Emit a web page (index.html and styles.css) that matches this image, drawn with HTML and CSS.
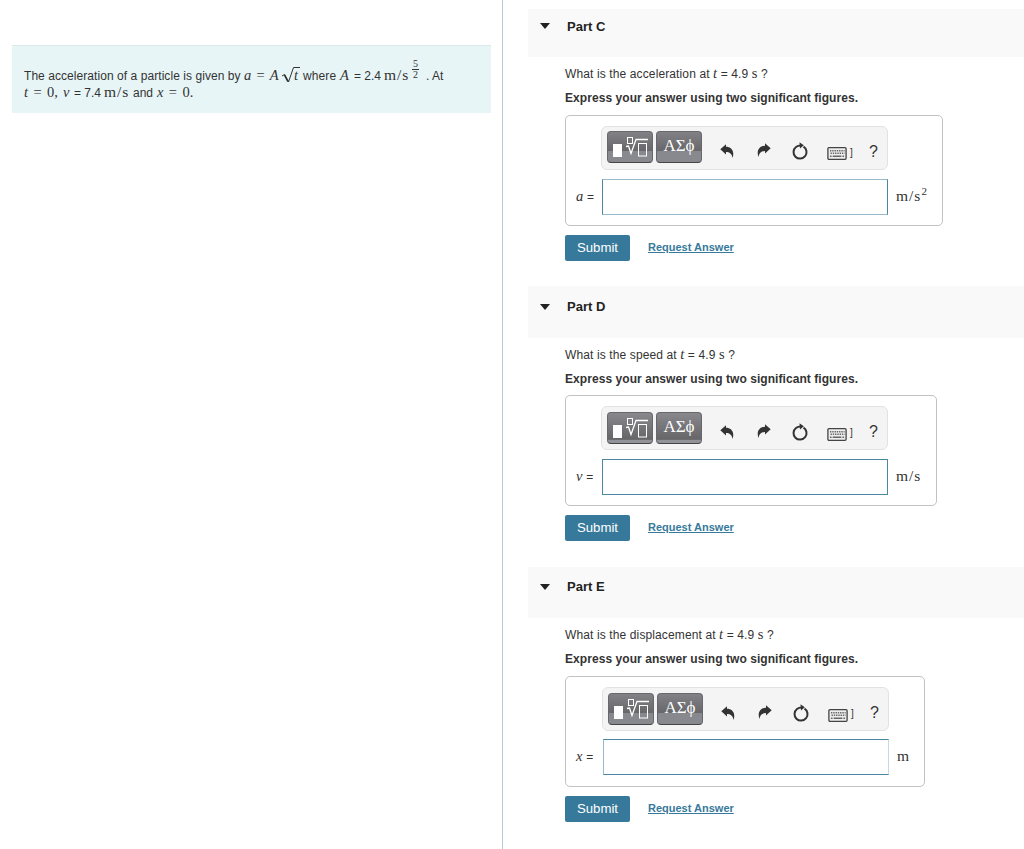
FILE: index.html
```html
<!doctype html>
<html lang="en">
    <head>
        <meta charset="UTF-8" />
        <meta name="viewport" content="width=device-width, initial-scale=1.0" />
        <title>Particle Acceleration</title>
        <link rel="stylesheet" href="styles.css">
    </head>
    <body>
        <svg class="sprite">
            <symbol id="icon-root" viewBox="0 0 36 22">
                <rect x="1" y="9" width="9" height="13" fill="#fff" />
                <g fill="none" stroke="#fff" stroke-width="1">
                    <rect x="15.5" y="2.5" width="5" height="6" />
                    <path d="M14 11.5 L16.5 11 L19 18.5 L24 4.5 H36" stroke-width="1.3" />
                    <rect x="26.5" y="8.5" width="8" height="12.5" />
                </g>
            </symbol>
            <symbol id="icon-undo" viewBox="0 0 14 14">
                <path d="M0.3 5.2 L6 0.2 V2.8 C11 2.8 15 7 12.5 14 C12 9.8 9.5 8 6 8 V10.4 Z" />
            </symbol>
            <symbol id="icon-redo" viewBox="0 0 14 14">
                <path d="M13.7 5.2 L8 0.2 V2.8 C3 2.8 -1 7 1.5 14 C2 9.8 4.5 8 8 8 V10.4 Z" />
            </symbol>
            <symbol id="icon-reset" viewBox="0 0 16 18">
                <path d="M11.5 4.6 A6.5 6.5 0 1 1 4 5 Q6 3.5 8.5 3.5" fill="none" stroke="#333" stroke-width="2" />
                <path d="M7.5 0.3 L11.8 3.3 L8 6.6 Z" />
            </symbol>
            <symbol id="icon-keyboard" viewBox="0 0 18 12">
                <rect x="0.6" y="0.6" width="16.8" height="10.8" rx="1" fill="#eee" stroke="#444" stroke-width="1.2" />
                <path d="M2.5 3.5 H16 M3 5.8 H16" fill="none" stroke="#666" stroke-width="1.3" stroke-dasharray="1.3 0.8" />
                <path d="M2.5 8.5 H4 M5 8.5 H13 M14 8.5 H15.5" fill="none" stroke="#666" stroke-width="1.5" />
            </symbol>
        </svg>

        <div class="page">
            <div class="problem">
                <div class="intro">
                    <div class="line">
                        <span class="t1">The acceleration of a particle is given by</span>
                        <span class="math eq"><i>a</i> = <i>A</i></span><svg class="radical" viewBox="0 0 19 17"><path d="M1 10 L3.5 8.5 L7.5 16 L12.5 1.5 H19" /><path d="M3.5 9 L7 15.5" stroke-width="1.6" /></svg><span class="math root"><i>t</i></span>
                        <span class="t2">where</span>
                        <span class="math var"><i>A</i></span>
                        <span class="t3">= 2.4</span>
                        <span class="math unit">m/s</span>
                        <span class="math frac"><span class="num">5</span><span>2</span></span>
                        <span class="t4">. At</span>
                    </div>
                    <div class="line">
                        <span class="math l1"><i>t</i> = 0,</span>
                        <span class="math l2"><i>v</i></span>
                        <span class="l3">= 7.4</span>
                        <span class="math unit l4">m/s</span>
                        <span class="l5">and</span>
                        <span class="math l6"><i>x</i> = 0.</span>
                    </div>
                </div>
            </div>

            <div class="parts">
                <section class="part part-c">
                    <div class="part-header"><span class="arrow"></span><h2>Part C</h2></div>
                    <div class="part-body">
                        <p class="question">What is the acceleration at <i class="math">t</i> = 4.9 <span class="math">s</span> ?</p>
                        <p class="hint">Express your answer using two significant figures.</p>
                        <div class="answer">
                            <div class="toolbar">
                                <button class="tool"><svg class="root-icon"><use href="#icon-root" /></svg></button>
                                <button class="tool">ΑΣϕ</button>
                                <svg class="icon undo"><use href="#icon-undo" /></svg>
                                <svg class="icon redo"><use href="#icon-redo" /></svg>
                                <svg class="icon reset"><use href="#icon-reset" /></svg>
                                <svg class="icon keyboard"><use href="#icon-keyboard" /></svg>
                                <span class="bracket">]</span>
                                <span class="help">?</span>
                            </div>
                            <div class="entry">
                                <label><i class="math">a</i> =</label>
                                <input type="text">
                                <span class="math units">m/s<sup>2</sup></span>
                            </div>
                        </div>
                        <div class="actions">
                            <button class="submit">Submit</button>
                            <a class="request">Request Answer</a>
                        </div>
                    </div>
                </section>

                <section class="part part-d">
                    <div class="part-header"><span class="arrow"></span><h2>Part D</h2></div>
                    <div class="part-body">
                        <p class="question">What is the speed at <i class="math">t</i> = 4.9 <span class="math">s</span> ?</p>
                        <p class="hint">Express your answer using two significant figures.</p>
                        <div class="answer">
                            <div class="toolbar">
                                <button class="tool"><svg class="root-icon"><use href="#icon-root" /></svg></button>
                                <button class="tool">ΑΣϕ</button>
                                <svg class="icon undo"><use href="#icon-undo" /></svg>
                                <svg class="icon redo"><use href="#icon-redo" /></svg>
                                <svg class="icon reset"><use href="#icon-reset" /></svg>
                                <svg class="icon keyboard"><use href="#icon-keyboard" /></svg>
                                <span class="bracket">]</span>
                                <span class="help">?</span>
                            </div>
                            <div class="entry">
                                <label><i class="math">v</i> =</label>
                                <input type="text">
                                <span class="math units">m/s</span>
                            </div>
                        </div>
                        <div class="actions">
                            <button class="submit">Submit</button>
                            <a class="request">Request Answer</a>
                        </div>
                    </div>
                </section>

                <section class="part part-e">
                    <div class="part-header"><span class="arrow"></span><h2>Part E</h2></div>
                    <div class="part-body">
                        <p class="question">What is the displacement at <i class="math">t</i> = 4.9 <span class="math">s</span> ?</p>
                        <p class="hint">Express your answer using two significant figures.</p>
                        <div class="answer">
                            <div class="toolbar">
                                <button class="tool"><svg class="root-icon"><use href="#icon-root" /></svg></button>
                                <button class="tool">ΑΣϕ</button>
                                <svg class="icon undo"><use href="#icon-undo" /></svg>
                                <svg class="icon redo"><use href="#icon-redo" /></svg>
                                <svg class="icon reset"><use href="#icon-reset" /></svg>
                                <svg class="icon keyboard"><use href="#icon-keyboard" /></svg>
                                <span class="bracket">]</span>
                                <span class="help">?</span>
                            </div>
                            <div class="entry">
                                <label><i class="math">x</i> =</label>
                                <input type="text">
                                <span class="math units">m</span>
                            </div>
                        </div>
                        <div class="actions">
                            <button class="submit">Submit</button>
                            <a class="request">Request Answer</a>
                        </div>
                    </div>
                </section>
            </div>
        </div>
    </body>
</html>
```
FILE: styles.css
```css
* {
    box-sizing: border-box;
}
body {
    margin: 0;
    background: #fff;
    color: #333;
    font-family: "Liberation Sans", Arial, sans-serif;
    font-size: 12px;
}
.sprite {
    display: none;
}
.page {
    display: flex;
    height: 849px;
    overflow: hidden;
}
.math {
    font-family: "Liberation Serif", serif;
    font-size: 14.5px;
}

/* left column */
.problem {
    width: 503px;
    padding: 45px 11px 0 12px;
    border-right: 1px solid #b3c8dc;
}
.intro {
    height: 68px;
    padding: 20px 12px 0;
    background: #e8f5f7;
    border-top: 1px solid #dce8ea;
}
.line {
    display: flex;
    align-items: baseline;
    height: 17px;
    line-height: 17px;
    white-space: nowrap;
}
.line span,
.radical {
    flex: none;
}
.t1 {
    width: 220px;
    letter-spacing: 0.06px;
}
.eq {
    width: 38px;
    word-spacing: 1.5px;
}
.radical {
    width: 19px;
    height: 17px;
    margin: 0 -6px 0 -1px;
    fill: none;
    stroke: #333;
    align-self: center;
}
.root {
    width: 9px;
}
.t2 {
    width: 37px;
    letter-spacing: 0.1px;
}
.var {
    width: 14px;
}
.t3 {
    width: 30px;
}
.unit {
    width: 28px;
    font-size: 15.5px;
    letter-spacing: 1px;
}
.frac {
    display: flex;
    flex-direction: column;
    align-self: flex-start;
    width: 7px;
    margin: -7px 7px 0 0;
    font-size: 10px;
    line-height: 10px;
    text-align: center;
}
.num {
    height: 11px;
    border-bottom: 1px solid #333;
}
.l1 {
    width: 39px;
    word-spacing: 1.8px;
}
.l2 {
    width: 11px;
}
.l3 {
    width: 30px;
}
.l4 {
    width: 29px;
}
.l5 {
    width: 24px;
}
.l6 {
    word-spacing: 1.8px;
}

/* right column */
.parts {
    flex: 1;
    padding: 9px 0 0 25px;
}
.part {
    height: 281px;
}
.part-c {
    height: 277px;
}
.part-header {
    display: flex;
    align-items: flex-start;
    height: 52px;
    padding: 13px 0 0 12px;
    background: #f9f9f9;
}
.part-c .part-header {
    height: 48px;
    padding-top: 10px;
}
.part-e .part-header {
    height: 51px;
    padding-top: 12px;
}
.arrow {
    margin: 5px 17px 0 0;
    border: 5px solid transparent;
    border-top: 6px solid #222;
    border-bottom: 0;
}
.part-c .arrow {
    margin-top: 4px;
}
h2 {
    margin: 0;
    color: #222;
    font-size: 13px;
    line-height: 16px;
}
.part-body {
    padding: 7px 0 0 37px;
}
.question,
.hint {
    height: 18px;
    margin: 0 0 7px;
    line-height: 18px;
}
.question {
    letter-spacing: 0.12px;
}
.hint {
    margin-bottom: 8px;
    font-weight: bold;
    letter-spacing: 0.06px;
}
.part-d .hint {
    margin-bottom: 7px;
}
.answer {
    width: 378px;
    height: 111px;
    padding: 10px 0 0 10px;
    border: 1px solid #c2c2c2;
    border-radius: 5px;
}
.part-d .answer {
    width: 372px;
}
.part-e .answer {
    width: 360px;
}
.toolbar {
    display: flex;
    width: 287px;
    height: 44px;
    margin-left: 25px;
    padding: 5px 0 0 5px;
    background: #f4f4f4;
    border: 1px solid #e2e2e2;
    border-radius: 6px;
}
.part-e .toolbar {
    margin-left: 26px;
}
.tool {
    width: 46px;
    height: 32px;
    margin-right: 3px;
    padding: 0 0 3px;
    color: #fff;
    font: 17px/27px "Liberation Serif", serif;
    background: linear-gradient(#828286, #68686c 62%, #88888f 64%, #88888f);
    border: 1px solid #68686c;
    border-bottom-color: #444;
    border-radius: 4px;
}
.part-c .tool {
    margin-top: -1px;
}
.part-d .tool {
    background: linear-gradient(#88888d, #666669 88%, #929299 90%);
}
.root-icon {
    display: block;
    width: 36px;
    height: 22px;
    margin: 0 auto;
}
.icon {
    flex: none;
    fill: #333;
}
.undo {
    width: 14px;
    height: 14px;
    margin: 12px 23px 0 15px;
}
.redo {
    width: 14px;
    height: 14px;
    margin: 11px 21px 0 0;
}
.reset {
    width: 16px;
    height: 18px;
    margin: 10px 19px 0 0;
}
.keyboard {
    width: 20px;
    height: 13px;
    margin: 15px 3px 0 0;
}
.part-d .icon,
.part-e .icon {
    transform: translateY(1px);
}
.bracket {
    width: 19px;
    padding-top: 15px;
    font-size: 10px;
}
.help {
    padding-top: 11px;
    font-size: 16px;
}
.entry {
    display: flex;
    align-items: center;
    height: 36px;
    margin-top: 9px;
}
.part-e .entry {
    margin-top: 8px;
}
label {
    width: 26px;
    padding-bottom: 2px;
    white-space: nowrap;
    letter-spacing: 0.2px;
}
.part-e label {
    width: 27px;
}
input {
    width: 286px;
    height: 36px;
    margin: 0 8px 0 0;
    border: 1px solid #4b87a3;
    background: #fff;
}
.part-c input {
    border-top-color: #96bac9;
    border-bottom-color: #96bac9;
}
.part-e input {
    border-left-color: #96bac9;
    border-right-color: #c4dae3;
}
.units {
    padding-bottom: 2px;
    font-size: 15.5px;
    letter-spacing: 1px;
}
.units sup {
    font-size: 11px;
    line-height: 0;
}
.actions {
    display: flex;
    align-items: center;
    margin-top: 9px;
}
.submit {
    width: 65px;
    height: 26px;
    margin-right: 18px;
    padding: 0 0 2px;
    color: #fff;
    font: 13.2px "Liberation Sans", Arial, sans-serif;
    background: #37799b;
    border: 0;
    border-radius: 2px;
}
.request {
    padding-bottom: 2px;
    color: #37799b;
    font-size: 11px;
    font-weight: bold;
    text-decoration: underline;
}
```
